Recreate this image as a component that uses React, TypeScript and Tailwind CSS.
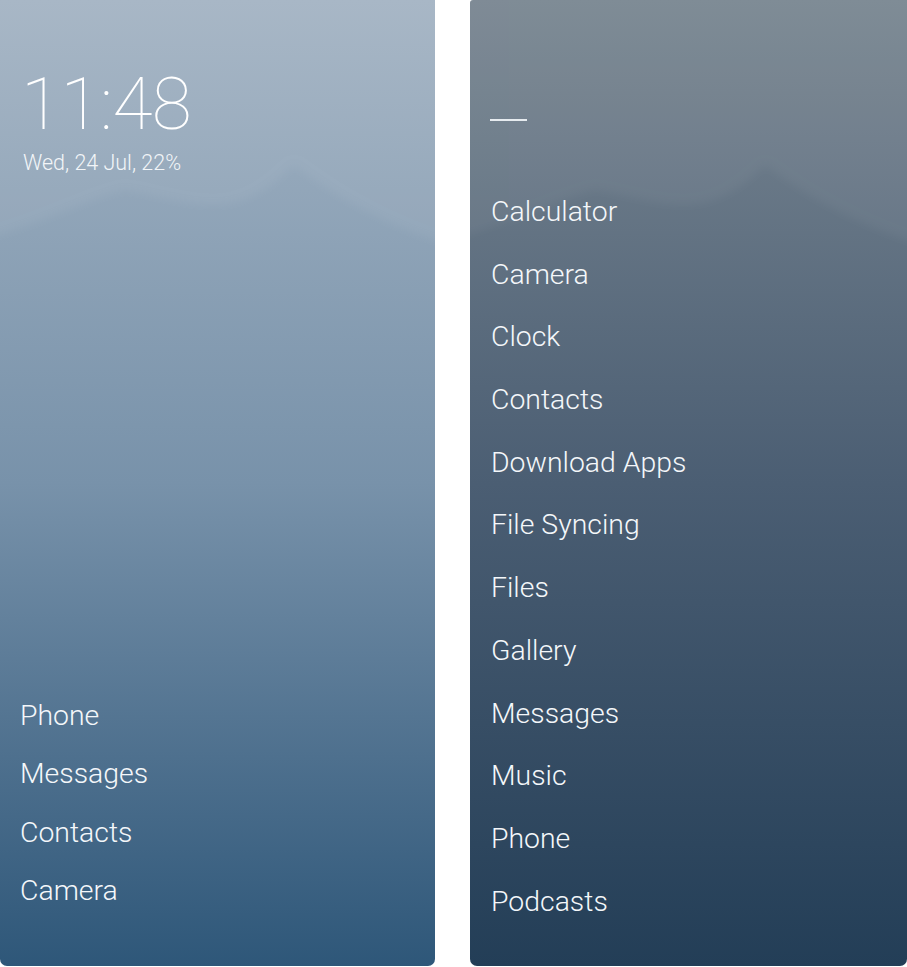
import React from "react";

const leftApps = ["Phone", "Messages", "Contacts", "Camera"];
const rightApps = [
  "Calculator",
  "Camera",
  "Clock",
  "Contacts",
  "Download Apps",
  "File Syncing",
  "Files",
  "Gallery",
  "Messages",
  "Music",
  "Phone",
  "Podcasts",
];

function Hills({ id, op }: { id: string; op: number }) {
  return (
    <svg
      className="absolute inset-0 w-full h-full pointer-events-none"
      viewBox="0 0 437 966"
      preserveAspectRatio="none"
    >
      <defs>
        <filter id={id} x="-20%" y="-20%" width="140%" height="140%">
          <feGaussianBlur stdDeviation="5" />
        </filter>
      </defs>
      <path
        d="M-20 240 C40 225 85 200 125 190 C160 196 185 205 215 205 C250 205 275 185 295 165 C335 195 385 225 460 248 L460 -20 L-20 -20 Z"
        fill="#ffffff"
        opacity={op}
        filter={`url(#${id})`}
      />
    </svg>
  );
}

export default function App() {
  return (
    <div
      className="w-[907px] h-[967px] bg-white flex gap-[35px] overflow-hidden"
      style={{ fontFamily: "Roboto, 'Noto Sans', sans-serif" }}
    >
      {/* Left: home screen */}
      <div className="relative w-[435px] h-[966px] rounded-b-[7px] overflow-hidden bg-gradient-to-b from-[#a3b3c3] via-[#7892aa] to-[#2e5779] text-white flex flex-col">
        <Hills id="hl" op={0.05} />
        <div className="relative pl-[21px] pt-[68px]">
          <div className="text-[73px] leading-none font-thin tracking-[-0.5px]">11:48</div>
          <div className="mt-[11px] pl-[2px] text-[21.5px] leading-none font-light text-[#f2f5f8]">
            Wed, 24 Jul, 22%
          </div>
        </div>
        <div className="relative mt-auto pb-[45px] pl-[20px]">
          {leftApps.map((a) => (
            <div key={a} className="h-[58.5px] flex items-center text-[28.4px] font-light text-[#f4f7fa]">
              {a}
            </div>
          ))}
        </div>
      </div>

      {/* Right: app drawer */}
      <div className="relative flex-1 h-[966px] rounded-b-[7px] rounded-tl-[3px] overflow-hidden bg-gradient-to-b from-[#7a8792] via-[#4b5e73] to-[#233e57] text-white flex flex-col">
        <Hills id="hr" op={0.04} />
        <div className="relative pl-[20px] pt-[119px]">
          <div className="w-[37px] h-[2px] bg-[#e6ebef]" />
        </div>
        <div className="relative pl-[21px] pt-[60px]">
          {rightApps.map((a) => (
            <div key={a} className="h-[62.7px] flex items-center text-[28.4px] font-light text-[#f4f7fa]">
              {a}
            </div>
          ))}
        </div>
      </div>
    </div>
  );
}
